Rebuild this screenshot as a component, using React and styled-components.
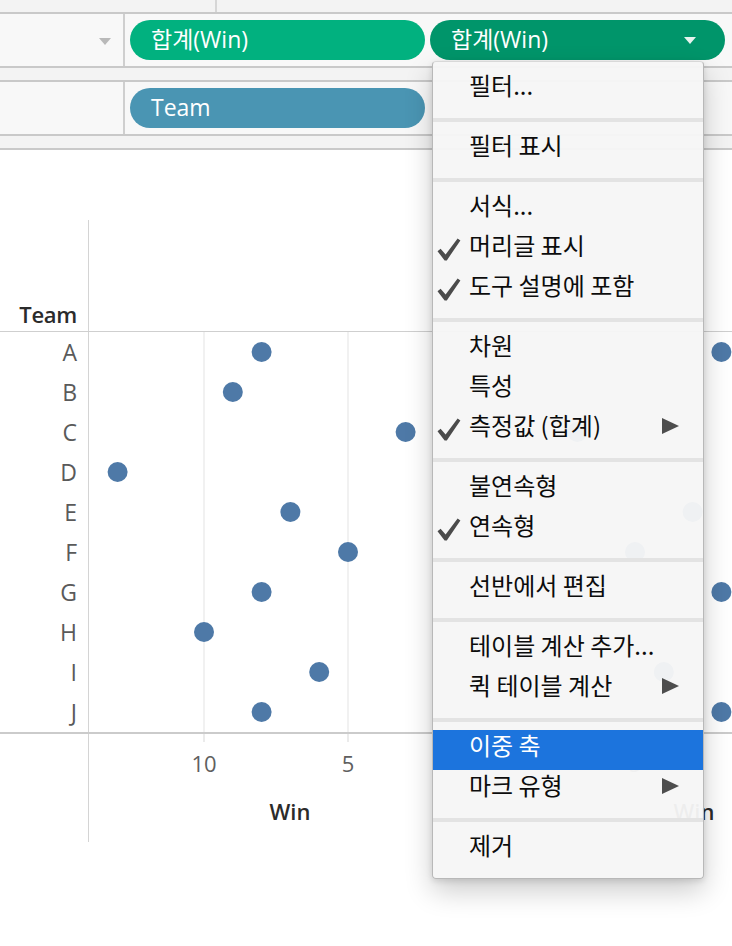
import React from "react";
import styled, { createGlobalStyle } from "styled-components";

const GlobalStyle = createGlobalStyle`
  html, body { margin: 0; padding: 0; background: #fff; }
  body {
    width: 732px;
    height: 946px;
    overflow: hidden;
    font-family: "Open Sans", "Noto Sans CJK KR", sans-serif;
  }
`;

const teams = [
  { name: "A", win: 8 },
  { name: "B", win: 9 },
  { name: "C", win: 3 },
  { name: "D", win: 13 },
  { name: "E", win: 7 },
  { name: "F", win: 5 },
  { name: "G", win: 8 },
  { name: "H", win: 10 },
  { name: "I", win: 6 },
  { name: "J", win: 8 },
];

// plot coordinates (svg x starts at page x = 89)
const PLOT_W = 643;
const ZERO_L = 403;
const ZERO_R = 402;
const UNIT = 28.8;
const ROW_H = 40;

const menu = [
  [{ label: "필터..." }],
  [{ label: "필터 표시" }],
  [
    { label: "서식..." },
    { label: "머리글 표시", check: true },
    { label: "도구 설명에 포함", check: true },
  ],
  [{ label: "차원" }, { label: "특성" }, { label: "측정값 (합계)", check: true, sub: true }],
  [{ label: "불연속형" }, { label: "연속형", check: true }],
  [{ label: "선반에서 편집" }],
  [{ label: "테이블 계산 추가..." }, { label: "퀵 테이블 계산", sub: true }],
  [{ label: "이중 축", active: true }, { label: "마크 유형", sub: true }],
  [{ label: "제거" }],
];

const Page = styled.div`
  position: relative;
  width: 732px;
  height: 946px;
  overflow: hidden;
  background: #fff;
`;

const Strip = styled.div`
  display: flex;
  height: 12px;
  background: #f3f3f3;
  border-bottom: 2px solid #c9c9c9;
`;

const StripCell = styled.div`
  width: ${(p) => p.$w}px;
  border-right: 2px solid #d6d6d6;
`;

const Shelf = styled.div`
  display: flex;
  height: 52px;
  background: #f8f8f8;
  border-bottom: 2px solid #c9c9c9;
`;

const ShelfLabel = styled.div`
  width: 125px;
  border-right: 2px solid #cfcfcf;
  display: flex;
  align-items: center;
  justify-content: flex-end;
  padding-right: 12px;
  box-sizing: border-box;
  flex-shrink: 0;
`;

const PillTrack = styled.div`
  display: flex;
  align-items: center;
  gap: 5px;
  padding-left: 5px;
`;

const Pill = styled.div`
  width: 295px;
  height: 40px;
  flex-shrink: 0;
  box-sizing: border-box;
  border-radius: 20px;
  background: ${(p) => p.$bg};
  color: #fff;
  display: flex;
  align-items: center;
  justify-content: space-between;
  padding: 0 29px 2px 21px;
  font-size: 23px;
  line-height: 1;
`;

const Caret = styled.span`
  width: 0;
  height: 0;
  margin-top: 2px;
  border-left: 6px solid transparent;
  border-right: 6px solid transparent;
  border-top: 7px solid ${(p) => p.$color};
`;

const ChartHeader = styled.div`
  height: 181px;
  display: flex;
  align-items: flex-end;
  border-bottom: 1px solid #cfcfcf;
`;

const HeaderCell = styled.div`
  width: 89px;
  height: 111px;
  box-sizing: border-box;
  border-right: 1px solid #d4d4d4;
  display: flex;
  align-items: flex-end;
  justify-content: flex-end;
  padding: 0 11px 2px 0;
  font-size: 22px;
  font-weight: 600;
  color: #2b2b2b;
  letter-spacing: -0.3px;
`;

const Body = styled.div`
  display: flex;
  height: 400px;
  border-bottom: 2px solid #cbcbcb;
`;

const RowHeaders = styled.div`
  width: 89px;
  flex-shrink: 0;
  box-sizing: border-box;
  border-right: 1px solid #d4d4d4;
  display: grid;
  grid-template-rows: repeat(10, ${ROW_H}px);
`;

const RowLabel = styled.div`
  display: flex;
  align-items: center;
  justify-content: flex-end;
  padding-right: 11px;
  font-size: 23px;
  color: #5a5a5a;
`;

const AxisRow = styled.div`
  display: flex;
  height: 108px;
`;

const AxisCell = styled.div`
  width: 89px;
  flex-shrink: 0;
  box-sizing: border-box;
  border-right: 1px solid #d4d4d4;
`;

const Plot = styled.svg`
  display: block;
  flex-shrink: 0;
  font-family: "Open Sans", sans-serif;
`;

const Menu = styled.div`
  position: absolute;
  left: 432px;
  top: 61px;
  width: 272px;
  box-sizing: border-box;
  background: rgba(246, 246, 246, 0.96);
  border: 1px solid #b8b8b8;
  border-top-color: #d8d8d8;
  border-radius: 4px;
  box-shadow: 0 12px 28px rgba(0, 0, 0, 0.2), 0 2px 6px rgba(0, 0, 0, 0.12);
  font-family: "Noto Sans CJK KR", "Open Sans", sans-serif;
  overflow: hidden;
`;

const MenuSection = styled.div`
  padding: 8px 0;
`;

const MenuSep = styled.div`
  height: 4px;
  background: #e3e3e3;
`;

const MenuItem = styled.div`
  height: 40px;
  display: flex;
  align-items: center;
  font-size: 24px;
  font-weight: 400;
  line-height: 1;
  color: ${(p) => (p.$active ? "#fff" : "#0c0c0c")};
  background: ${(p) => (p.$active ? "rgba(21, 111, 220, 0.97)" : "transparent")};
`;

const Label = styled.span`
  margin-bottom: 10px;
`;

const CheckSlot = styled.span`
  width: 36px;
  flex-shrink: 0;
  display: flex;
  align-items: center;
  padding-left: 4px;
  box-sizing: border-box;
  margin-bottom: 2px;
`;

const SubArrow = styled.svg`
  margin-left: auto;
  margin-right: 24px;
  margin-bottom: 8px;
`;

function Check() {
  return (
    <svg width="24" height="23" viewBox="0 0 24 23">
      <path
        d="M0.5 13.2 L3.6 10.8 L8.6 16.6 L20.6 0.6 L23.4 2.4 L9.8 22.4 L7.6 22.4 Z"
        fill="#4b4b4b"
      />
    </svg>
  );
}

function ContextMenu() {
  return (
    <Menu>
      {menu.map((section, si) => (
        <React.Fragment key={si}>
          {si > 0 && <MenuSep />}
          <MenuSection>
            {section.map((item) => (
              <MenuItem key={item.label} $active={item.active}>
                <CheckSlot>{item.check && <Check />}</CheckSlot>
                <Label>{item.label}</Label>
                {item.sub && (
                  <SubArrow width="17" height="16" viewBox="0 0 17 16">
                    <path d="M0 0 L17 8 L0 16 Z" fill="#4d4d4d" />
                  </SubArrow>
                )}
              </MenuItem>
            ))}
          </MenuSection>
        </React.Fragment>
      ))}
    </Menu>
  );
}

const leftX = (v) => ZERO_L - v * UNIT;
const rightX = (v) => ZERO_R + v * UNIT;
const grid = [leftX(10), leftX(5), rightX(5), rightX(10)];

export default function App() {
  return (
    <Page>
      <GlobalStyle />
      <Strip>
        <StripCell $w={215} />
      </Strip>
      <Shelf>
        <ShelfLabel>
          <Caret $color="#b9b9b9" />
        </ShelfLabel>
        <PillTrack>
          <Pill $bg="#01b17f">합계(Win)</Pill>
          <Pill $bg="#00956a">
            합계(Win)
            <Caret $color="#e6f3ee" />
          </Pill>
        </PillTrack>
      </Shelf>
      <Strip />
      <Shelf>
        <ShelfLabel />
        <PillTrack>
          <Pill $bg="#4a95b3">Team</Pill>
        </PillTrack>
      </Shelf>
      <Strip />

      <ChartHeader>
        <HeaderCell>Team</HeaderCell>
      </ChartHeader>
      <Body>
        <RowHeaders>
          {teams.map((t) => (
            <RowLabel key={t.name}>{t.name}</RowLabel>
          ))}
        </RowHeaders>
        <Plot width={PLOT_W} height={400}>
          {grid.map((x) => (
            <line key={x} x1={x} x2={x} y1={0} y2={400} stroke="#ececec" strokeWidth="1.5" />
          ))}
          {teams.map((t, i) => (
            <g key={t.name} fill="#4e79a7">
              <circle cx={leftX(t.win)} cy={i * ROW_H + 20} r="10" />
              <circle cx={rightX(t.win)} cy={i * ROW_H + 20} r="10" />
            </g>
          ))}
        </Plot>
      </Body>
      <AxisRow>
        <AxisCell />
        <Plot width={PLOT_W} height={108}>
          {grid.map((x) => (
            <line key={x} x1={x} x2={x} y1={0} y2={8} stroke="#e4e4e4" strokeWidth="1.5" />
          ))}
          <g fontSize="22" fill="#5f5f5f" textAnchor="middle">
            <text x={leftX(10)} y={38}>10</text>
            <text x={leftX(5)} y={38}>5</text>
            <text x={rightX(5)} y={38}>5</text>
          </g>
          <g fontSize="22" fontWeight="600" fill="#2b2b2b" textAnchor="middle">
            <text x={201} y={86}>Win</text>
            <text x={605} y={86}>Win</text>
          </g>
        </Plot>
      </AxisRow>

      <ContextMenu />
    </Page>
  );
}
